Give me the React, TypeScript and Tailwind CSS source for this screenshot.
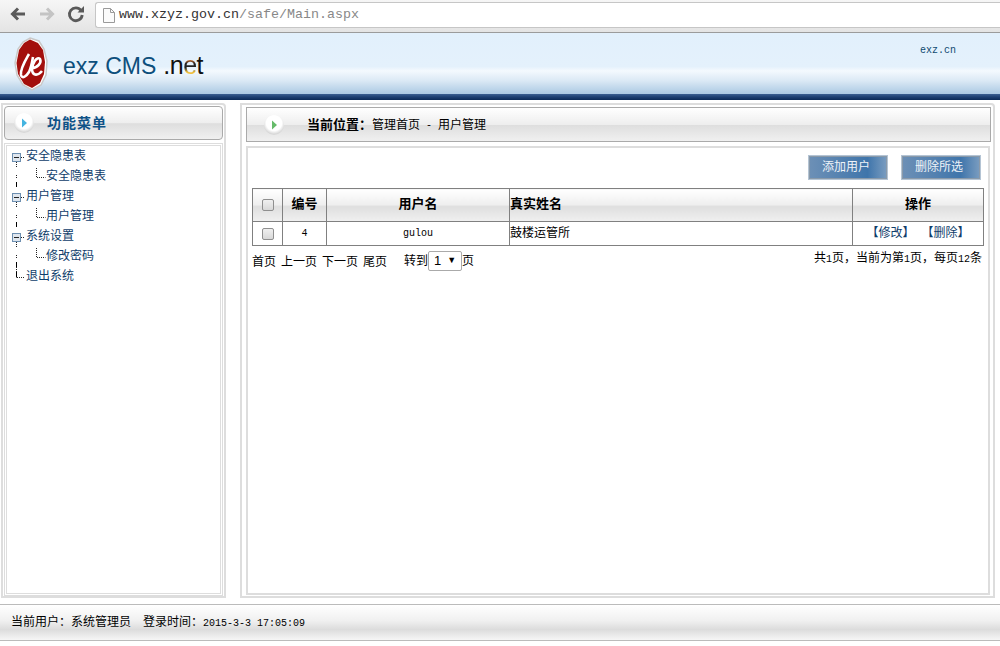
const cjk = "font-['Liberation_Mono','Noto_Sans_CJK_SC',monospace]";

const BarBg = "bg-[linear-gradient(#ffffff_0%,#eeeeee_50%,#dedede_52%,#f0f0f0_100%)]";

const BulletIcon = ({ color }: { color: string }) => (
  <svg width="28" height="28" viewBox="0 0 28 28">
    <defs>
      <radialGradient id={"b" + color} cx="50%" cy="40%" r="55%">
        <stop offset="0.7" stopColor="#ffffff" />
        <stop offset="1" stopColor="#d8d8d8" />
      </radialGradient>
    </defs>
    <circle cx="14" cy="14" r="10" fill={"url(#b" + color + ")"} />
    <path d="M12 9.5 L17 14 L12 18.5 Z" fill={color} />
  </svg>
);

const Toolbar = () => (
  <div className="flex h-[33px] items-start border-b border-[#9b9b9b] bg-[linear-gradient(#f6f6f6,#e4e4e4)]">
    <div className="mt-[5px] flex w-[95px] items-center pl-[9px]">
      <svg width="18" height="18" viewBox="0 0 18 18" className="mr-[11px]">
        <path d="M16 9H4M9 3.5 3.5 9 9 14.5" fill="none" stroke="#5a5a5a" strokeWidth="3" />
      </svg>
      <svg width="18" height="18" viewBox="0 0 18 18" className="mr-[11px]">
        <path d="M2 9h12M9 3.5 14.5 9 9 14.5" fill="none" stroke="#c4c4c4" strokeWidth="3" />
      </svg>
      <svg width="18" height="18" viewBox="0 0 18 18">
        <path d="M14 5.5A6.4 6.4 0 1 0 15.2 10" fill="none" stroke="#5a5a5a" strokeWidth="2.8" />
        <path d="M10.5 7.5H17V1Z" fill="#5a5a5a" />
      </svg>
    </div>
    <div className="mt-[2px] flex h-[26px] flex-1 items-center rounded-l-[3px] border border-r-0 border-[#c6c6c6] bg-white pl-[6px]">
      <svg width="14" height="17" viewBox="0 0 14 17" className="mr-[3px]">
        <path d="M1.5 1.5h7l4 4v10h-11z" fill="#fbfbfb" stroke="#9a9a9a" />
        <path d="M8.5 1.5v4h4" fill="none" stroke="#9a9a9a" />
      </svg>
      <span className="font-['Liberation_Mono',monospace] text-[13.33px] text-[#333]">
        www.xzyz.gov.cn<span className="text-[#888]">/safe/Main.aspx</span>
      </span>
    </div>
  </div>
);

const Logo = () => (
  <svg width="36" height="54" viewBox="0 0 36 54" className="ml-[14px] mt-[4px] shrink-0">
    <path d="M16 1 L25 4 L30 12 L33 24 L32 38 L27 48 L18 53 L9 48 L3 38 L1 26 L4 12 L9 5 Z" fill="#ffffff" stroke="#c9c9c9" strokeWidth="1.5" />
    <path d="M16 2.5 L24 6 L29 13 L31 25 L30 37 L26 46 L18 51 L10 47 L4 37 L2.5 26 L5 13 L10 6 Z" fill="#a30f0c" />
    <path d="M15 17c-4 7-9 15-8 21 1 4 5 2 8-3 2-4 3-9 4-15" fill="none" stroke="#fff" strokeWidth="2.6" />
    <path d="M18 31c5 0 10-5 8-9-3-3-8 4-8 11 1 6 6 6 10 1" fill="none" stroke="#fff" strokeWidth="2.6" />
  </svg>
);

const Header = () => (
  <div className="flex h-[61px] bg-[linear-gradient(#e2f0fc_0%,#e4f1fc_55%,#f4f9fe_62%,#dbe9f5_78%,#abc9e3_100%)]">
    <Logo />
    <div className="ml-[13px] mt-[15px] h-[30px] whitespace-nowrap font-['Liberation_Sans',sans-serif] text-[23px] leading-[35px] text-[#0d4f7c]">
      exz CMS
      <span className="ml-[7px] text-[25px] tracking-[-0.5px] text-[#111]">
        .n<span className="bg-[linear-gradient(#e07020_30%,#222_45%,#222_60%,#f0c040_75%)] bg-clip-text text-transparent">e</span>t
      </span>
    </div>
    <div className="ml-auto mr-[44px] mt-[10px] font-['Liberation_Mono',monospace] text-[10px] text-[#0f4a70]">
      exz.cn
    </div>
  </div>
);

type TreeRow = { label: string; kind: "parent" | "child" | "last" };

const rows: TreeRow[] = [
  { label: "安全隐患表", kind: "parent" },
  { label: "安全隐患表", kind: "child" },
  { label: "用户管理", kind: "parent" },
  { label: "用户管理", kind: "child" },
  { label: "系统设置", kind: "parent" },
  { label: "修改密码", kind: "child" },
  { label: "退出系统", kind: "last" },
];

const TreeLines = ({ kind }: { kind: TreeRow["kind"] }) => {
  if (kind === "parent") {
    return (
      <svg width="16" height="20" viewBox="0 0 16 20" className="shrink-0">
        <rect x="2.5" y="6.5" width="8" height="8" fill="#dfe6ee" stroke="#6d8fb0" />
        <path d="M4 10.5h5" stroke="#222" />
        <path d="M11 10.5h4" stroke="#222" strokeDasharray="1 1" />
        <path d="M6.5 15v5" stroke="#222" strokeDasharray="1 1" />
      </svg>
    );
  }
  if (kind === "child") {
    return (
      <svg width="36" height="20" viewBox="0 0 36 20" className="shrink-0">
        <path d="M6.5 8v4" stroke="#222" strokeDasharray="1 1" />
        <path d="M6.5 15v5" stroke="#000" />
        <path d="M26.5 1v9.5h9" fill="none" stroke="#222" strokeDasharray="1 1" />
      </svg>
    );
  }
  return (
    <svg width="16" height="20" viewBox="0 0 16 20" className="shrink-0">
      <path d="M6.5 0v5" stroke="#222" strokeDasharray="1 1" />
      <path d="M6.5 5v5.5" stroke="#000" />
      <path d="M7 10.5h8" stroke="#222" strokeDasharray="1 1" />
    </svg>
  );
};

const Sidebar = () => (
  <div className="ml-px flex h-[495px] w-[225px] flex-col rounded-tr-[4px] border-2 border-[#dddddd] px-px pt-px">
    <div className={`flex h-[34px] items-center rounded-[4px] border border-[#aaaaaa] pl-[5px] ${BarBg}`}>
      <BulletIcon color="#45b4e0" />
      <span className={`ml-[9px] mt-[2px] text-[14px] font-bold tracking-[1px] text-[#0e5287] ${cjk}`}>功能菜单</span>
    </div>
    <div className="mt-[3px] flex-1 border-[3px] border-double border-[#dddddd] pl-[3px] pt-[1px]">
      {rows.map((r, i) => (
        <div key={i} className="flex h-[20px] items-center">
          <TreeLines kind={r.kind} />
          <span className={`text-[12px] text-[#0f3d6b] ${cjk}`}>{r.label}</span>
        </div>
      ))}
    </div>
  </div>
);

const BlueButton = ({ label }: { label: string }) => (
  <button className={`h-[25px] w-[80px] border border-[#b4c4d4] bg-[linear-gradient(90deg,#6d90b6,#3f75ab_75%,#7b9dc0)] pr-[4px] pt-[1px] text-[12px] text-[#eef3f8] outline outline-1 outline-[#8a9aaa] outline-offset-[-2px] ${cjk}`}>
    {label}
  </button>
);

const Check = () => (
  <span className="mx-auto block h-[12px] w-[12px] rounded-[2px] border border-[#8f8f8f] bg-[linear-gradient(#f0f0f0,#d8d8d8)]" />
);

const th = `border border-[#808080] font-bold text-[13px] text-black ${BarBg}`;
const td = "border border-[#808080]";

const UserTable = () => (
  <table className={`mt-[8px] w-[732px] table-fixed border-collapse ${cjk}`}>
    <colgroup>
      <col className="w-[30px]" />
      <col className="w-[44px]" />
      <col className="w-[183px]" />
      <col className="w-[343px]" />
      <col className="w-[131px]" />
    </colgroup>
    <thead>
      <tr className="h-[33px]">
        <th className={th}><Check /></th>
        <th className={th}>编号</th>
        <th className={th}>用户名</th>
        <th className={`${th} text-left`}>真实姓名</th>
        <th className={th}>操作</th>
      </tr>
    </thead>
    <tbody>
      <tr className="h-[24px]">
        <td className={td}><Check /></td>
        <td className={`${td} text-center text-[10px] text-black`}>4</td>
        <td className={`${td} text-center text-[10px] text-black`}>gulou</td>
        <td className={`${td} text-[12px] text-black`}>鼓楼运管所</td>
        <td className={`${td} text-center text-[12px] text-[#0f3d6b]`}>【修改】 【删除】</td>
      </tr>
    </tbody>
  </table>
);

const Content = () => (
  <div className="ml-[14px] flex h-[495px] w-[755px] flex-col rounded-tr-[4px] border-2 border-[#dddddd] pl-[4px] pr-[2px] pt-[2px]">
    <div className={`flex h-[35px] shrink-0 items-center border border-[#aaaaaa] pl-[13px] ${BarBg}`}>
      <BulletIcon color="#66bb6a" />
      <span className={`ml-[19px] mt-[2px] flex items-center text-[12px] text-black ${cjk}`}>
        <b className="w-[65px] text-[13px]">当前位置：</b>
        <span>管理首页</span>
        <span className="mx-[6px] text-[10px]">-</span>
        <span>用户管理</span>
      </span>
    </div>
    <div className="mb-px mr-px mt-[4px] flex-1 border-2 border-[#dddddd] bg-white pl-[4px] pr-[6px]">
      <div className="flex h-[32px] items-end justify-end gap-[13px] pr-px">
        <BlueButton label="添加用户" />
        <BlueButton label="删除所选" />
      </div>
      <UserTable />
      <div className={`mt-[3px] flex items-start justify-between text-[12px] text-black ${cjk}`}>
        <div className="flex h-[24px] items-center">
          <span className="mt-[3px] flex gap-[5px]">
            <span>首页</span>
            <span>上一页</span>
            <span>下一页</span>
            <span>尾页</span>
          </span>
          <span className="ml-[17px] mt-[2px]">转到</span>
          <span className="flex h-[20px] w-[34px] items-center justify-between rounded-[2px] border border-[#aaa] px-[5px] font-['Liberation_Sans',sans-serif] text-[13px]">
            1<span className="text-[9px]">▼</span>
          </span>
          <span className="mt-[2px]">页</span>
        </div>
        <span className="mt-[1px]">
          共<span className="text-[10px]">1</span>页，当前为第<span className="text-[10px]">1</span>页，每页<span className="text-[10px]">12</span>条
        </span>
      </div>
    </div>
  </div>
);

const Footer = () => (
  <div className={`mt-[6px] flex h-[37px] items-center border-y border-[#bbbbbb] pl-[11px] text-[12px] text-black bg-[linear-gradient(#ffffff,#f0f0f0_45%,#dcdcdc_70%,#f6f6f6)] ${cjk}`}>
    当前用户：系统管理员
    <span className="ml-[12px]">登录时间：<span className="text-[10px] font-normal">2015-3-3 17:05:09</span></span>
  </div>
);

export default function App() {
  return (
    <div className="h-[646px] w-[1000px] overflow-hidden bg-white">
      <Toolbar />
      <Header />
      <div className="h-[6px] bg-[linear-gradient(#3a5f92,#1d3f72_50%,#0b2a58)]" />
      <div className="mt-[3px] flex">
        <Sidebar />
        <Content />
      </div>
      <Footer />
    </div>
  );
}
